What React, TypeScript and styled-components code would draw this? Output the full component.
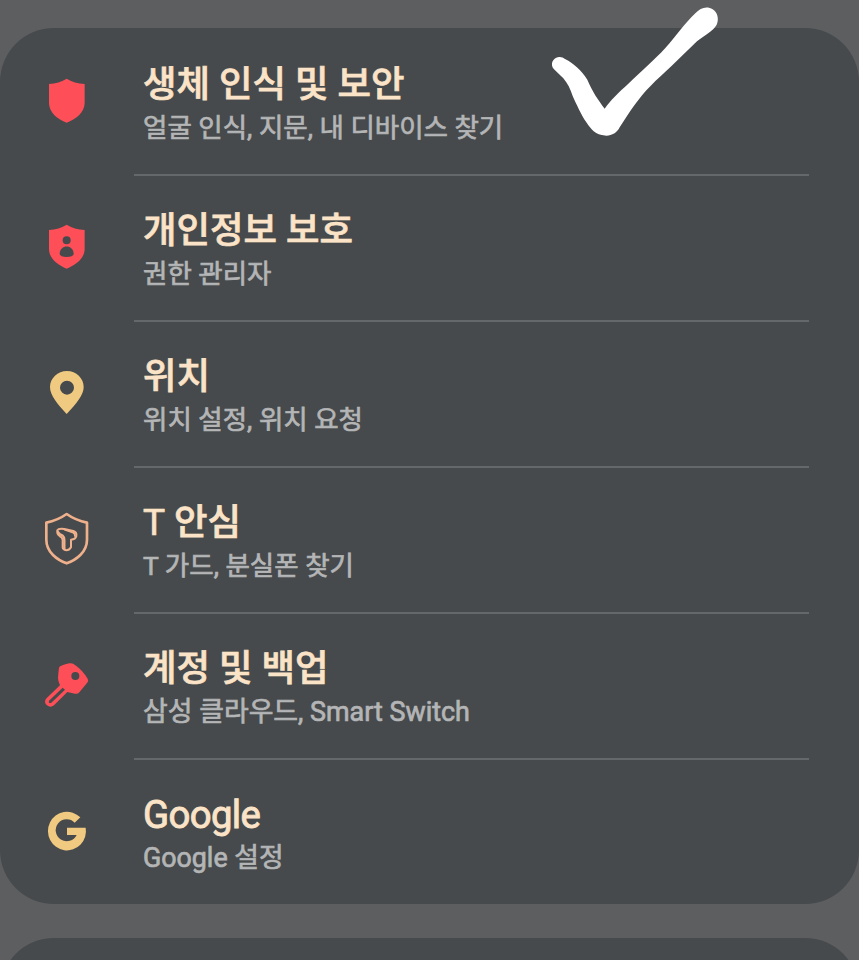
import React from 'react';
import styled, { createGlobalStyle } from 'styled-components';

const GlobalStyle = createGlobalStyle`
  * { box-sizing: border-box; }
  html, body { margin: 0; height: 100%; background: #5d5e60; overflow: hidden; }
`;

const Screen = styled.main`
  position: relative;
  height: 960px;
  padding-top: 28px;
  overflow: hidden;
  background: #5d5e60;
  font-family: Roboto, 'Noto Sans CJK KR', sans-serif;
`;

const Card = styled.section`
  height: 876px;
  border-radius: 54px;
  background: #474a4c;
`;

const NextCard = styled(Card)`
  height: 120px;
  margin-top: 34px;
`;

const List = styled.ul`
  margin: 0;
  padding: 0;
  list-style: none;
`;

const Row = styled.li`
  display: grid;
  grid-template-columns: 134px 675px;
  height: 146px;
`;

const IconSlot = styled.div<{ $top: number }>`
  padding: ${p => p.$top}px 0 0 30px;

  svg { display: block; width: 80px; height: 80px; }
`;

const Body = styled.div<{ $last: boolean }>`
  height: 148px;
  padding: 30px 0 0 9px;
  border-bottom: ${p => (p.$last ? 'none' : '2px solid #65686a')};
`;

const Title = styled.h2<{ $latin: boolean }>`
  margin: 0;
  font-size: ${p => (p.$latin ? 38.3 : 36.4)}px;
  line-height: 53px;
  font-weight: ${p => (p.$latin ? 400 : 500)};
  letter-spacing: ${p => (p.$latin ? -0.6 : 0)}px;
  white-space: nowrap;
  color: #fbe3c8;
  -webkit-text-stroke: ${p => (p.$latin ? 0.9 : 0.7)}px #fbe3c8;
`;

const LatinLetter = styled.span`
  font-size: 37px;
  font-weight: 400;
`;

const Subtitle = styled.p<{ $size: number }>`
  margin: 0;
  font-size: ${p => p.$size}px;
  line-height: 34px;
  font-weight: 400;
  white-space: nowrap;
  color: #b4b5b6;
  -webkit-text-stroke: 0.7px #b4b5b6;
`;

const CheckMark = styled.svg`
  position: absolute;
  left: 540px;
  top: 0;
  width: 190px;
  height: 150px;
`;

const shield = 'M110 56 Q133 70 164 72 V128 C164 158 137 177 110 188 C83 177 57 158 57 128 V72 Q87 70 110 56Z';

const ShieldIcon = () => (
  <svg viewBox="0 0 240 240"><path fill="#fe4e58" d={shield} /></svg>
);

const PrivacyIcon = () => (
  <svg viewBox="0 0 240 240">
    <path fill="#fe4e58" d={shield} />
    <circle cx="110" cy="103" r="12" fill="#474a4c" />
    <path fill="#474a4c" d="M89 144 C89 114 131 114 131 144 Q129 153 110 153 Q91 153 89 144Z" />
  </svg>
);

const LocationIcon = () => (
  <svg viewBox="0 0 240 240">
    <path
      fill="#f0ca80"
      fillRule="evenodd"
      d="M111 63 C139 63 161 85 161 111 C161 136 138 162 110 192 C82 162 60 136 60 111 C60 85 83 63 111 63Z M111 92 A21 21 0 1 0 111 134 A21 21 0 1 0 111 92Z"
    />
  </svg>
);

const GuardIcon = () => (
  <svg viewBox="0 0 240 240" fill="none" stroke="#efb08c" strokeLinejoin="round" strokeLinecap="round">
    <path strokeWidth="8" d="M110 42 Q137 61 171 68 V119 C171 157 138 180 110 190 C82 180 49 157 49 119 V68 Q83 61 110 42Z" />
    <path strokeWidth="6" d="M82 91 Q86 84 103 87 L130 93 Q141 97 139 108 Q137 118 123 119 V142 Q118 151 109 151 Q98 149 98 142 V120 Q97 112 89 108 Q80 102 82 91Z" />
    <path strokeWidth="7" d="M84 96 Q88 103 98 107 Q103 111 103 120 V147" />
    <path strokeWidth="6" d="M104 89 L130 98 Q136 102 135 108" />
  </svg>
);

const KeyIcon = () => (
  <svg viewBox="0 0 240 240">
    <path
      fill="#fe4e58"
      fillRule="evenodd"
      d="M92 48 Q116 38 122 40 Q129 40 138 47 Q158 61 173 86 Q177 92 171 99 L148 127 Q143 133 135 131 L112 126 L72 166 Q61 174 51 166 Q41 157 48 146 L90 106 Q84 94 84 84 Q85 68 87 54 Q88 50 92 48Z M136 66 A12 12 0 1 0 136 90 A12 12 0 1 0 136 66Z M98 113 L57 152 Q54 158 60 160 L64 158 L105 119Z"
    />
  </svg>
);

const GoogleIcon = () => (
  <svg viewBox="0 0 240 240">
    <path
      fill="#f0ca80"
      d="M151 67 A57 58 0 1 0 167 98 H111 V120 H140 A33 33 0 1 1 134 83Z"
    />
  </svg>
);

interface Setting {
  title: React.ReactNode;
  latin?: boolean;
  subtitle: string;
  subtitleSize?: number;
  icon: React.ComponentType;
  iconTop: number;
}

const settings: Setting[] = [
  { title: '생체 인식 및 보안', subtitle: '얼굴 인식, 지문, 내 디바이스 찾기', icon: ShieldIcon, iconTop: 32 },
  { title: '개인정보 보호', subtitle: '권한 관리자', icon: PrivacyIcon, iconTop: 32 },
  { title: '위치', subtitle: '위치 설정, 위치 요청', icon: LocationIcon, iconTop: 30 },
  { title: <><LatinLetter>T</LatinLetter> 안심</>, subtitle: 'T 가드, 분실폰 찾기', icon: GuardIcon, iconTop: 34 },
  { title: '계정 및 백업', subtitle: '삼성 클라우드, Smart Switch', subtitleSize: 26.9, icon: KeyIcon, iconTop: 38 },
  { title: 'Google', latin: true, subtitle: 'Google 설정', subtitleSize: 26.8, icon: GoogleIcon, iconTop: 37 },
];

export default function App() {
  return (
    <>
      <GlobalStyle />
      <Screen>
        <Card>
          <List>
            {settings.map(({ title, latin = false, subtitle, subtitleSize = 26.5, icon: Icon, iconTop }, i) => (
              <Row key={subtitle}>
                <IconSlot $top={iconTop}><Icon /></IconSlot>
                <Body $last={i === settings.length - 1}>
                  <Title $latin={latin}>{title}</Title>
                  <Subtitle $size={subtitleSize}>{subtitle}</Subtitle>
                </Body>
              </Row>
            ))}
          </List>
        </Card>
        <NextCard />
        <CheckMark viewBox="0 0 570 450">
          <path
            fill="#fff"
            d="M57 171 Q67 170 75 177 C98 188 125 211 142 239 C157 275 174 299 194 326 C210 302 237 276 265 251 C302 216 344 179 376 144 C407 111 433 71 466 40 C481 22 502 17 518 28 C532 36 538 57 530 74 C520 93 492 106 471 124 L423 170 C382 211 340 245 305 287 C284 313 260 348 239 382 C230 401 210 410 190 406 C168 405 152 387 139 367 C124 345 108 310 98 288 C91 267 83 250 70 235 L42 208 C29 193 38 173 57 171Z"
          />
        </CheckMark>
      </Screen>
    </>
  );
}
